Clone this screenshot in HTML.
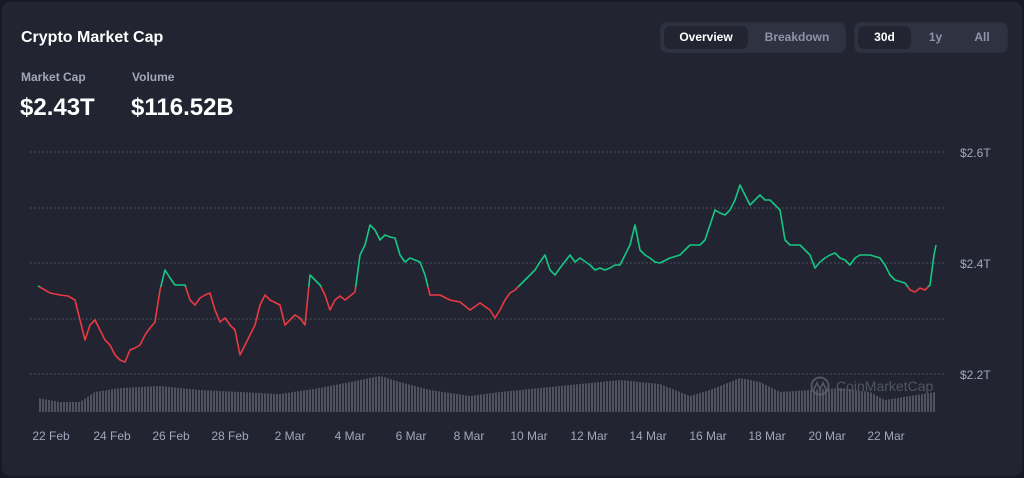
<!DOCTYPE html>
<html><head><meta charset="utf-8"><style>
*{margin:0;padding:0;box-sizing:border-box}
body{width:1024px;height:478px;background:#171924;font-family:"Liberation Sans",sans-serif;overflow:hidden}
.card{position:absolute;left:2px;top:2px;width:1020px;height:474px;background:#222531;border-radius:8px}
.t{position:absolute;color:#fff;font-weight:bold}
.l{position:absolute;color:#a1a7bb;font-size:12px;font-weight:bold}
.seg{position:absolute;top:22px;height:31px;background:#2f3241;border-radius:7px;border:1px solid #2b2e3c}
.seg div{position:absolute;top:3px;height:23px;line-height:23px;text-align:center;font-size:12px;font-weight:bold;color:#8d93a8;border-radius:6px}
.seg .on{background:#222531;color:#fff}
.x{position:absolute;top:429px;color:#a1a7bb;font-size:12px;transform:translateX(-50%)}
.y{position:absolute;left:960px;color:#a1a7bb;font-size:12px}
</style></head><body>
<div class="card"></div>
<div class="t" style="left:21px;top:29px;font-size:16px">Crypto Market Cap</div>
<div class="l" style="left:21px;top:70px">Market Cap</div>
<div class="l" style="left:132px;top:70px">Volume</div>
<div class="t" style="left:20px;top:94px;font-size:24px">$2.43T</div>
<div class="t" style="left:131px;top:94px;font-size:24px">$116.52B</div>
<div class="seg" style="left:660px;width:186px"><div class="on" style="left:3px;width:84px">Overview</div><div style="left:90px;width:92px">Breakdown</div></div>
<div class="seg" style="left:854px;width:154px"><div class="on" style="left:3px;width:53px">30d</div><div style="left:58px;width:45px">1y</div><div style="left:104px;width:46px">All</div></div>
<div class="y" style="top:146px">$2.6T</div>
<div class="y" style="top:257px">$2.4T</div>
<div class="y" style="top:368px">$2.2T</div>
<svg width="1024" height="478" style="position:absolute;left:0;top:0">
<defs>
<pattern id="st" width="3" height="10" patternUnits="userSpaceOnUse"><rect width="2" height="10" fill="#50535f"/></pattern>
<clipPath id="up"><rect x="0" y="0" width="1024" height="287"/></clipPath>
<clipPath id="dn"><rect x="0" y="287" width="1024" height="200"/></clipPath>
</defs>
<g stroke="#5a5e6b" stroke-dasharray="1.5 2.5" stroke-width="1">
<line x1="30" y1="152" x2="946" y2="152"/><line x1="30" y1="208" x2="946" y2="208"/><line x1="30" y1="263" x2="946" y2="263"/><line x1="30" y1="319" x2="946" y2="319"/><line x1="30" y1="374" x2="946" y2="374"/>
</g>
<path fill="url(#st)" d="M38,412 L38,398 L60,402 L80,402 L95,392 L120,388 L160,386 L200,390 L240,392 L280,394 L320,388 L350,382 L380,376 L400,382 L430,390 L470,396 L500,392 L540,388 L580,384 L620,380 L660,384 L690,396 L710,390 L740,378 L760,382 L780,392 L810,390 L840,388 L870,392 L885,400 L910,396 L936,392 L936,412 Z"/>
<g fill="#5d616e" opacity="0.8">
<text x="836" y="391" font-size="14" font-family="Liberation Sans">CoinMarketCap</text>
<circle cx="820" cy="386" r="8.5" fill="none" stroke="#5d616e" stroke-width="2"/>
<path d="M814,389 L817,383 L820,389 L823,383 L826,389" fill="none" stroke="#5d616e" stroke-width="1.8"/>
</g>
<g fill="none" stroke-width="1.6" stroke-linejoin="round">
<polyline stroke="#16c784" clip-path="url(#up)" points="38,286 45,290 50,293 60,295 68,296 75,300 80,320 85,340 90,325 95,320 100,330 105,340 110,345 115,355 120,360 125,362 130,350 135,348 140,345 145,335 150,328 155,322 160,290 165,270 170,278 175,285 185,285 190,300 195,305 200,298 205,295 210,293 215,310 220,322 225,318 230,325 235,330 240,355 245,345 250,335 255,325 260,305 265,295 270,300 280,305 285,325 290,320 295,315 300,318 305,325 310,275 315,280 320,285 325,295 330,310 335,300 340,296 345,300 350,296 355,292 360,255 365,245 370,225 375,230 380,240 385,235 390,237 395,238 400,255 405,262 410,258 420,262 425,275 430,295 440,295 450,300 460,302 470,310 480,303 490,310 495,318 500,310 505,300 510,293 515,290 520,285 525,280 530,275 535,270 540,262 545,255 550,270 555,275 560,268 570,255 575,262 580,258 590,265 595,270 600,268 605,270 610,268 615,265 620,265 625,255 630,245 635,225 640,250 645,255 650,258 655,262 660,263 670,258 680,255 690,245 700,245 705,240 710,225 715,210 720,213 725,215 730,210 735,200 740,185 745,195 750,205 755,200 760,195 765,200 770,200 775,205 780,210 785,240 790,245 800,245 810,255 815,268 820,262 825,258 830,255 835,253 840,258 845,260 850,265 855,258 860,255 870,255 880,258 885,265 890,275 895,280 905,283 910,290 915,292 920,288 925,290 930,285 934,255 936,245"/>
<polyline stroke="#ea3943" clip-path="url(#dn)" points="38,286 45,290 50,293 60,295 68,296 75,300 80,320 85,340 90,325 95,320 100,330 105,340 110,345 115,355 120,360 125,362 130,350 135,348 140,345 145,335 150,328 155,322 160,290 165,270 170,278 175,285 185,285 190,300 195,305 200,298 205,295 210,293 215,310 220,322 225,318 230,325 235,330 240,355 245,345 250,335 255,325 260,305 265,295 270,300 280,305 285,325 290,320 295,315 300,318 305,325 310,275 315,280 320,285 325,295 330,310 335,300 340,296 345,300 350,296 355,292 360,255 365,245 370,225 375,230 380,240 385,235 390,237 395,238 400,255 405,262 410,258 420,262 425,275 430,295 440,295 450,300 460,302 470,310 480,303 490,310 495,318 500,310 505,300 510,293 515,290 520,285 525,280 530,275 535,270 540,262 545,255 550,270 555,275 560,268 570,255 575,262 580,258 590,265 595,270 600,268 605,270 610,268 615,265 620,265 625,255 630,245 635,225 640,250 645,255 650,258 655,262 660,263 670,258 680,255 690,245 700,245 705,240 710,225 715,210 720,213 725,215 730,210 735,200 740,185 745,195 750,205 755,200 760,195 765,200 770,200 775,205 780,210 785,240 790,245 800,245 810,255 815,268 820,262 825,258 830,255 835,253 840,258 845,260 850,265 855,258 860,255 870,255 880,258 885,265 890,275 895,280 905,283 910,290 915,292 920,288 925,290 930,285 934,255 936,245"/>
</g>
</svg>
<div class="x" style="left:51px">22 Feb</div><div class="x" style="left:112px">24 Feb</div><div class="x" style="left:171px">26 Feb</div><div class="x" style="left:230px">28 Feb</div><div class="x" style="left:290px">2 Mar</div><div class="x" style="left:350px">4 Mar</div><div class="x" style="left:411px">6 Mar</div><div class="x" style="left:469px">8 Mar</div><div class="x" style="left:529px">10 Mar</div><div class="x" style="left:589px">12 Mar</div><div class="x" style="left:648px">14 Mar</div><div class="x" style="left:708px">16 Mar</div><div class="x" style="left:767px">18 Mar</div><div class="x" style="left:827px">20 Mar</div><div class="x" style="left:886px">22 Mar</div>
</body></html>
